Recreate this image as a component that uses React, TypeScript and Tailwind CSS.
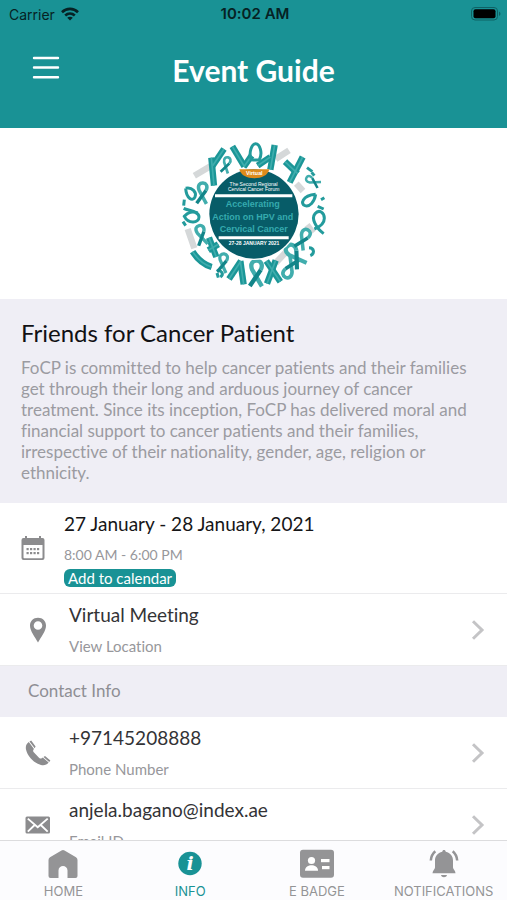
import type { ReactNode } from 'react';
import clsx from 'clsx';

interface InfoRowProps {
  icon: ReactNode;
  title: string;
  subtitle: string;
  href: string;
}

interface Ribbon {
  x: number;
  y: number;
  rotate: number;
  scale: number;
}

// Awareness ribbons scattered around the badge
const RIBBONS: Ribbon[] = [
  { x: 170, y: 100, rotate: 14, scale: 0.8 },
  { x: 98, y: 184, rotate: 4, scale: 1.05 },
  { x: 94, y: 310, rotate: -12, scale: 1 },
  { x: 160, y: 394, rotate: 8, scale: 0.95 },
  { x: 260, y: 424, rotate: 2, scale: 1.3 },
  { x: 360, y: 412, rotate: 205, scale: 1.1 },
  { x: 374, y: 372, rotate: -34, scale: 1.25 },
  { x: 402, y: 322, rotate: 26, scale: 1.05 },
  { x: 428, y: 150, rotate: -60, scale: 0.75 },
];

const LOOPS = [
  'M245 86C236 66 246 38 258 38S280 66 269 86Q257 88 245 86',
  'M48 172C68 168 82 184 76 198S50 204 48 172',
  'M42 232C58 240 88 240 88 258S56 280 44 256C54 244 70 240 84 246',
  'M438 190C434 214 420 228 406 224S396 194 438 190',
  'M462 308C438 290 424 262 436 248S464 244 464 262S450 288 434 294',
  'M142 420C156 416 164 430 152 438',
  'M418 350C434 350 436 368 422 374',
];

const STRIPS = [
  'M133 164L125 80',
  'M129 104L163 54',
  'M188 46L224 106',
  'M246 74L222 108',
  'M315 42L302 116',
  'M264 104L302 78',
  'M360 154L399 78',
  'M346 92L384 128',
  'M69 362Q92 398 126 408',
  'M118 320L140 378',
  'M146 340L116 358',
  'M178 444L214 390',
  'M212 390L222 460',
  'M290 390L332 452',
  'M318 388L292 458',
];

const DASHES = ['M412 110L428 122', 'M426 124L434 134', 'M454 206L464 200', 'M444 226L462 234', 'M44 206L42 224', 'M40 272L48 284', 'M142 426L146 440'];

const GRAY_STRIPS = ['M74 134L122 106', 'M318 84L358 58', 'M380 158L400 180', 'M54 294L74 352', 'M318 396L350 362', 'M412 282L430 306'];

function EventLogo() {
  return (
    <svg viewBox="28 24 450 450" className="h-[150px] w-[150px]" role="img" aria-label="Cervical Cancer Forum">
      <g fill="none" stroke="#d5d8d9" strokeWidth="19">
        {GRAY_STRIPS.map((d) => <path key={d} d={d} />)}
      </g>
      <g fill="none" stroke="#1b9697" strokeWidth="19">
        {STRIPS.map((d) => <path key={d} d={d} />)}
      </g>
      <g fill="none" stroke="#3fadad" strokeWidth="5">
        {STRIPS.map((d) => <path key={d} d={d} />)}
      </g>
      <g fill="none" stroke="#239b9c" strokeWidth="9">
        {LOOPS.map((d) => <path key={d} d={d} />)}
        {DASHES.map((d) => <path key={d} d={d} />)}
      </g>
      {RIBBONS.map((r) => (
        <g key={`${r.x}-${r.y}`} transform={`translate(${r.x} ${r.y}) rotate(${r.rotate}) scale(${r.scale})`} fill="none" strokeWidth="10">
          <path d="M14 32L-10 -6C-22 -34 22 -34 10 -6" stroke="#41adad" />
          <path d="M10 -6L-14 32" stroke="#128589" />
        </g>
      ))}
      <circle cx="253" cy="249" r="138" fill="#fff" />
      <circle cx="253" cy="249" r="134" fill="#075c68" />
      <path d="M209 115H299C294 134 276 142 254 142S214 134 209 115Z" fill="#dd8a1b" />
      <path d="M136 194H368" stroke="#fff" strokeWidth="9" />
      <path d="M147 320H357" stroke="#fff" strokeWidth="9" />
      <g textAnchor="middle" fontFamily="'Liberation Sans', sans-serif" fontWeight="700">
        <text x="254" y="133" fontSize="16" fill="#fff">Virtual</text>
        <text x="252" y="165" fontSize="15" fontWeight="400" fill="#fff">The Second Regional</text>
        <text x="252" y="181" fontSize="15" fontWeight="400" fill="#fff">Cervical Cancer Forum</text>
        <text x="249" y="227" fontSize="27" fill="#35aaae">Accelerating</text>
        <text x="249" y="266" fontSize="27" fill="#35aaae">Action on HPV and</text>
        <text x="252" y="304" fontSize="27" fill="#35aaae">Cervical Cancer</text>
        <text x="253" y="342" fontSize="15" fill="#fff">27-28 JANUARY 2021</text>
      </g>
    </svg>
  );
}

function WifiIcon() {
  return (
    <svg viewBox="0 0 18 14" className="h-3.5 w-[18px]" fill="none" stroke="#062224" strokeWidth="2.600">
      <path d="M1 5.200C5.500 .8 12.500 .8 17 5.200" />
      <path d="M4.200 8.500C7 5.900 11 5.900 13.800 8.500" />
      <path d="M9 13.600L6.200 10.700C7.800 9.300 10.200 9.300 11.800 10.700Z" fill="#062224" stroke="none" />
    </svg>
  );
}

function BatteryIcon() {
  return (
    <svg viewBox="0 0 30 14" className="h-3.5 w-[30px]">
      <rect x="0.500" y="0.500" width="26" height="12.500" rx="3.500" fill="none" stroke="#0e6265" />
      <rect x="2.500" y="2.300" width="22" height="9" rx="2" fill="#000" />
      <path d="M28 4.500C30 5.500 30 8 28 9Z" fill="#0e6265" />
    </svg>
  );
}

function CalendarIcon() {
  return (
    <svg viewBox="0 0 24 26" className="h-[26px] w-6" fill="#8c8c8e">
      <path fillRule="evenodd" d="M4 1H6V3H18V1H20V3H21.500Q23.500 3 23.500 5V23Q23.500 25 21.500 25H2.500Q.5 25 .5 23V5Q.5 3 2.500 3H4ZM2.500 10V22.500Q2.500 23.200 3.200 23.200H20.800Q21.500 23.200 21.500 22.500V10Z" />
      {[5.5, 9, 12.5, 16].map((x) => (
        <g key={x}>
          <rect x={x} y="13" width="2.200" height="2.200" />
          <rect x={x} y="17" width="2.200" height="2.200" />
        </g>
      ))}
    </svg>
  );
}

function PinIcon() {
  return (
    <svg viewBox="0 0 18 26" className="h-[26px] w-[18px]" fill="#8c8c8e">
      <path fillRule="evenodd" d="M9 .8C13.800 .8 17 4.200 17 8.700C17 14 12 20 9 25.500C6 20 1 14 1 8.700C1 4.200 4.200 .8 9 .8ZM9 4.200A4.300 4.300 0 1 0 9 12.800A4.300 4.300 0 1 0 9 4.200Z" />
    </svg>
  );
}

function PhoneIcon() {
  return (
    <svg viewBox="0 0 26 26" className="h-[26px] w-[26px]" fill="#8c8c8e">
      <path d="M3.800 2C1.200 3.800 .4 6.500 1 9.500C2.600 16.500 9 23.200 16 25C19 25.700 21.800 25 23.600 22.600L17.800 17.600C16.700 18.800 15.400 18.900 14 17.700L9 12.500C7.800 11.200 7.900 10 9 8.900Z" />
      <path d="M4.500 1.500L6.200 .6L10.600 6.600L9.700 8.300ZM24.200 22L25.400 20.400L20 16.100L18.500 16.900Z" />
    </svg>
  );
}

function MailIcon() {
  return (
    <svg viewBox="0 0 26 18" className="h-[18px] w-[26px]">
      <rect x="0.500" y="0.500" width="24.500" height="17" rx="1.500" fill="#8c8c8e" />
      <path d="M2.800 2.600L12.700 11.300L22.700 2.600M2.800 15.600L9.400 9.300M22.700 15.600L16 9.300" fill="none" stroke="#fff" strokeWidth="1.900" />
    </svg>
  );
}

function ChevronIcon() {
  return (
    <svg viewBox="0 0 14 20" className="h-5 w-3.5 shrink-0" fill="none" stroke="#c4c4c6" strokeWidth="3">
      <path d="M2 1.200L11 10L2 18.800" />
    </svg>
  );
}

function HomeIcon() {
  return (
    <svg viewBox="0 0 30 30" className="h-[30px] w-[30px]" fill="currentColor">
      <path d="M13.500 1.400Q15 .4 16.500 1.400L28 8.200Q29.500 9.200 29.500 11V27Q29.500 29 27.500 29H19.500V21.500C19.500 15.500 10.500 15.500 10.500 21.500V29H2.500Q.5 29 .5 27V11Q.5 9.200 2 8.200Z" />
    </svg>
  );
}

function InfoIcon() {
  return (
    <svg viewBox="0 0 24 30" className="h-[30px] w-6">
      <circle cx="12" cy="14.500" r="11.700" fill="currentColor" />
      <text x="12" y="21" textAnchor="middle" fontSize="19" fontWeight="700" fontStyle="italic" fontFamily="'DejaVu Serif', serif" fill="#fff">i</text>
    </svg>
  );
}

function BadgeIcon() {
  return (
    <svg viewBox="0 0 36 30" className="h-[30px] w-9">
      <rect x="1" y="0.800" width="34" height="28" rx="3" fill="currentColor" />
      <g fill="#fff">
        <circle cx="12.500" cy="11.500" r="3.600" />
        <path d="M6 21.800C6 17.500 9.500 16.200 12.500 16.200S19 17.500 19 21.800Z" />
        <rect x="22" y="10" width="8.500" height="3.200" />
        <rect x="23" y="17" width="7.500" height="3.200" />
      </g>
    </svg>
  );
}

function BellIcon() {
  return (
    <svg viewBox="0 0 30 30" className="h-[30px] w-[30px]" fill="currentColor">
      <path d="M13.300 2.800C13.300 .4 16.700 .4 16.700 2.800C21.500 3.800 24 7.500 24 11.500V18.500C24 20.500 26.500 21.500 26.500 24.200H3.500C3.500 21.500 6 20.500 6 18.500V11.500C6 7.500 8.500 3.800 13.300 2.800ZM12 26H18C17.500 29 12.500 29 12 26Z" />
      <path d="M6.300 2.200C3.700 4.500 2 7.600 1.800 11.500M23.700 2.200C26.300 4.500 28 7.600 28.200 11.500" fill="none" stroke="currentColor" strokeWidth="2.500" />
    </svg>
  );
}

function InfoRow({ icon, title, subtitle, href }: InfoRowProps) {
  return (
    <a href={href} className="flex h-[72px] shrink-0 items-center border-b border-[#ebebed] pr-[22px]">
      <span className="flex w-[69px] shrink-0 justify-center pr-[6px] pl-3">{icon}</span>
      <span className="flex-1 pb-0.5">
        <span className="block text-[19px] leading-[30px] text-[#333336]">{title}</span>
        <span className="block pt-1 text-[15px] leading-6 text-[#97979b]">{subtitle}</span>
      </span>
      <ChevronIcon />
    </a>
  );
}

const TABS = [
  { label: 'HOME', icon: <HomeIcon /> },
  { label: 'INFO', icon: <InfoIcon />, active: true },
  { label: 'E BADGE', icon: <BadgeIcon /> },
  { label: 'NOTIFICATIONS', icon: <BellIcon /> },
];

export default function App() {
  return (
    <div className="flex h-screen flex-col bg-white font-['Lato',sans-serif] [font-variant-ligatures:none]">
      <header className="h-32 shrink-0 bg-[#199295]">
        <div className="grid h-7 grid-cols-3 items-center pr-1.5 pl-[9px] font-['Inter',sans-serif] text-[#062224]">
          <div className="flex items-center gap-1.5 text-[14px]">
            <span>Carrier</span>
            <WifiIcon />
          </div>
          <span className="text-center text-[15px] font-semibold">10:02 AM</span>
          <div className="flex justify-end">
            <BatteryIcon />
          </div>
        </div>
        <div className="grid grid-cols-[60px_1fr_60px] items-center px-8 pt-5">
          <button type="button" aria-label="Open menu" className="h-7 w-7">
            <svg viewBox="0 0 28 28" fill="none" stroke="#fff" strokeWidth="2.400" strokeLinecap="round">
              <path d="M2 2H26M2 11.500H26M2 21.300H26" />
            </svg>
          </button>
          <h1 className="text-center text-[30px] leading-[44px] font-bold text-white">Event Guide</h1>
        </div>
      </header>

      <main className="flex min-h-0 flex-1 flex-col overflow-hidden">
        <div className="flex h-[171px] shrink-0 items-center justify-center">
          <EventLogo />
        </div>

        <section className="shrink-0 bg-[#efeef5] px-[21px] pt-[18px] pb-5">
          <h2 className="text-[24px] leading-8 text-[#111114]">Friends for Cancer Patient</h2>
          <p className="pt-2 text-[17px] leading-[21px] text-[#9b9ba1]">
            FoCP is committed to help cancer patients and their families get through their long and arduous journey of
            cancer treatment. Since its inception, FoCP has delivered moral and financial support to cancer patients and
            their families, irrespective of their nationality, gender, age, religion or ethnicity.
          </p>
        </section>

        <section className="flex h-[91px] shrink-0 items-center border-b border-[#ebebed]">
          <span className="w-16 shrink-0 pl-[21px]">
            <CalendarIcon />
          </span>
          <div>
            <h3 className="text-[19px] leading-[30px] text-[#161618]">27 January - 28 January, 2021</h3>
            <p className="pt-1 pb-0.5 text-[14px] leading-6 text-[#97979b]">8:00 AM - 6:00 PM</p>
            <button type="button" className="block h-[18px] rounded-md bg-[#199295] px-1 text-[15px] leading-[18px] text-white">
              Add to calendar
            </button>
          </div>
        </section>

        <InfoRow icon={<PinIcon />} title="Virtual Meeting" subtitle="View Location" href="#location" />

        <h2 className="h-[51px] shrink-0 bg-[#efeef5] pl-7 text-[17px] leading-[50px] text-[#8e8e94]">Contact Info</h2>

        <InfoRow icon={<PhoneIcon />} title="+97145208888" subtitle="Phone Number" href="tel:+97145208888" />
        <InfoRow icon={<MailIcon />} title="anjela.bagano@index.ae" subtitle="Email ID" href="mailto:anjela.bagano@index.ae" />
      </main>

      <nav className="grid h-[60px] shrink-0 grid-cols-4 border-t border-[#dcdcde] bg-[#fcfcfe] font-['Inter',sans-serif]">
        {TABS.map((tab) => (
          <button
            key={tab.label}
            type="button"
            className={clsx('flex flex-col items-center pt-2', tab.active ? 'text-[#199295]' : 'text-[#949496]')}
          >
            {tab.icon}
            <span className="pt-1 text-[13px] leading-4">{tab.label}</span>
          </button>
        ))}
      </nav>
    </div>
  );
}
